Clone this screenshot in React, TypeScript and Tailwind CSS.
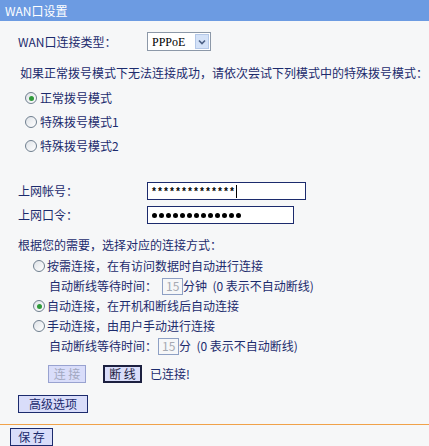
import React from 'react';

const font = { fontFamily: '"Noto Sans CJK SC", "Liberation Sans", sans-serif' };

const Radio: React.FC<{ checked?: boolean }> = ({ checked }) => (
  <span className="flex h-[12px] w-[12px] items-center justify-center rounded-full border border-[#6f7f8f] bg-gradient-to-br from-[#dfe3e8] to-white">
    {checked && <span className="h-[5px] w-[5px] rounded-full bg-[#2f9a3a]" />}
  </span>
);

const Btn: React.FC<{ label: string; className?: string }> = ({ label, className }) => (
  <button
    className={`flex h-[18px] items-center justify-center border bg-[#d9ddfa] text-[12px] leading-none ${className ?? ''}`}
  >
    {label}
  </button>
);

const App: React.FC = () => {
  return (
    <div className="h-[446px] w-[429px] overflow-hidden bg-[#f6f7f8] text-[12px] text-[#1c2b6d]" style={font}>
      <div className="flex h-[21px] items-center bg-[#6c9be2] pl-[5px] text-white">WAN口设置</div>

      <div className="pl-[18px]">
        {/* connection type */}
        <div className="mt-[11px] flex h-[19px] items-center">
          <span className="w-[129px]">WAN口连接类型：</span>
          <div className="flex h-[19px] w-[64px] items-center border border-[#8c98a8] bg-white">
            <span className="flex-1 pl-[4px] text-black" style={{ fontFamily: '"Liberation Serif", serif' }}>
              PPPoE
            </span>
            <span className="mr-[1px] flex h-[15px] w-[14px] items-center justify-center border border-[#b4c8e8] bg-[#d4e2f8]">
              <svg width="8" height="6" viewBox="0 0 8 6">
                <path d="M1 1.5 L4 4.5 L7 1.5" fill="none" stroke="#4d6185" strokeWidth="1.6" />
              </svg>
            </span>
          </div>
        </div>

        <p className="mt-[14px] h-[16px] pl-[2px] leading-[16px]">
          如果正常拨号模式下无法连接成功，请依次尝试下列模式中的特殊拨号模式：
        </p>

        <div className="mt-[5px] flex flex-col pl-[7px]">
          {['正常拨号模式', '特殊拨号模式1', '特殊拨号模式2'].map((t, i) => (
            <div key={t} className="flex h-[24px] items-center gap-[3px]">
              <Radio checked={i === 0} />
              <span>{t}</span>
            </div>
          ))}
        </div>

        {/* account */}
        <div className="mt-[24px] flex h-[18px] items-center">
          <span className="w-[129px]">上网帐号：</span>
          <div className="flex h-[18px] w-[159px] items-center border border-[#1c2b6d] bg-white pl-[3px] text-black">
            <span className="pt-[3px] text-[10px] font-bold" style={{ fontFamily: '"Liberation Mono", monospace' }}>
              **************
            </span>
            <span className="ml-[1px] h-[13px] w-px bg-black" />
          </div>
        </div>
        <div className="mt-[6px] flex h-[18px] items-center">
          <span className="w-[129px]">上网口令：</span>
          <div className="flex h-[18px] w-[147px] items-center gap-[2px] border border-[#1c2b6d] bg-white pl-[4px]">
            {Array(13)
              .fill(null)
              .map((_, i) => (
                <span key={i} className="h-[5px] w-[5px] rounded-full bg-black" />
              ))}
          </div>
        </div>

        <p className="mt-[13px] h-[16px] leading-[16px]">根据您的需要，选择对应的连接方式：</p>

        <div className="mt-[3px] flex flex-col pl-[15px]">
          <div className="flex h-[20px] items-center gap-[2px]">
            <Radio />
            <span>按需连接，在有访问数据时自动进行连接</span>
          </div>
          <div className="flex h-[20px] items-center pl-[16px]">
            <span>自动断线等待时间：</span>
            <span className="ml-[5px] flex h-[17px] w-[21px] items-center border border-[#8ea0c4] bg-[#f6f7f8] pl-[3px] text-[#a6aab2]">
              15
            </span>
            <span>分钟 &nbsp;(0 表示不自动断线)</span>
          </div>
          <div className="flex h-[20px] items-center gap-[2px]">
            <Radio checked />
            <span>自动连接，在开机和断线后自动连接</span>
          </div>
          <div className="flex h-[20px] items-center gap-[2px]">
            <Radio />
            <span>手动连接，由用户手动进行连接</span>
          </div>
          <div className="flex h-[20px] items-center pl-[16px]">
            <span>自动断线等待时间：</span>
            <span className="ml-[1px] flex h-[17px] w-[21px] items-center border border-[#8ea0c4] bg-[#f6f7f8] pl-[3px] text-[#a6aab2]">
              15
            </span>
            <span>分 &nbsp;(0 表示不自动断线)</span>
          </div>

          <div className="mt-[9px] flex h-[18px] items-center pl-[15px]">
            <Btn label="连 接" className="w-[38px] border-[#98a2d0] text-[#a2a8c0]" />
            <Btn label="断 线" className="ml-[17px] w-[39px] border-2 border-[#1c2040] text-[#1c2040]" />
            <span className="ml-[8px]">已连接!</span>
          </div>
        </div>

        <div className="mt-[12px]">
          <Btn label="高级选项" className="w-[70px] border-[#1c2b6d] text-[#1c2b6d]" />
        </div>
      </div>

      <div className="mt-[11px] h-px bg-[#f0a24a]" />
      <div className="mt-[3px] pl-[10px]">
        <Btn label="保 存" className="w-[43px] border-[#1c2b6d] text-[#1c2b6d]" />
      </div>
    </div>
  );
};

export default App;
